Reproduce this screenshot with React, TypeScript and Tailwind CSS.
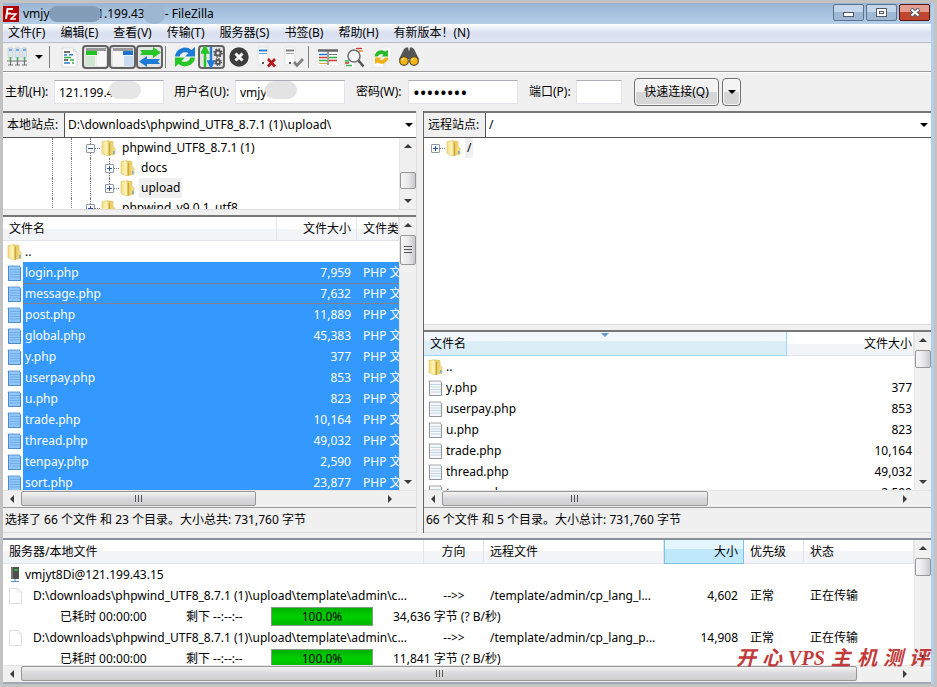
import type { ReactNode } from "react";

const FONT = "font-['Noto_Sans','Noto_Sans_CJK_SC',sans-serif]";

/* ---------- icons ---------- */

function Folder() {
  return (
    <svg width="16" height="16" viewBox="0 0 16 16" aria-hidden="true" className="shrink-0">
      <defs>
        <linearGradient id="fold-a" x1="0" x2="1">
          <stop offset="0" stopColor="#f3dc7c" />
          <stop offset=".6" stopColor="#fdf5bd" />
          <stop offset="1" stopColor="#ecd06a" />
        </linearGradient>
        <linearGradient id="fold-b" x1="0" x2="1">
          <stop offset="0" stopColor="#e2bf4a" />
          <stop offset="1" stopColor="#f6e38e" />
        </linearGradient>
      </defs>
      <path d="M6.500 .8L12 1.500V7l2 1v6.500L8 15.300z" fill="url(#fold-b)" stroke="#dcbd55" strokeWidth=".6" />
      <path d="M1 1.500L5.500 .8L8.800 3V15.500L5.500 15.500L1 13.500Z" fill="url(#fold-a)" stroke="#dfc25e" strokeWidth=".6" />
      <path d="M7.600 3h1.300v12.500H7.600z" fill="#c9a234" />
      <path d="M12.200 11h1.300v3h-1.300z" fill="#5aa5dc" />
    </svg>
  );
}

function PhpFile({ selected }: { selected?: boolean }) {
  const paper = selected ? "#92c6f8" : "#f6f9fb";
  const line = selected ? "#6cadec" : "#c3d3df";
  const edge = selected ? "#4c8cc9" : "#8e9498";
  return (
    <svg width="16" height="18" viewBox="0 0 16 18" aria-hidden="true" className="shrink-0">
      <path d="M1 2H12L14 4V17H1Z" fill={paper} />
      <path d="M2.500 5.500H13M2.500 8H13M2.500 10.500H13M2.500 13H13" stroke={line} strokeWidth="1" />
      <path d="M1.500 2V16.500H13.500V4" fill="none" stroke={edge} />
      <path d="M1 2.500l1-1 1 1 1-1 1 1 1-1 1 1 1-1 1 1 1-1 1 1 1-1 2 3" fill="none" stroke={edge} strokeWidth=".9" />
    </svg>
  );
}

function BlankFile() {
  return (
    <svg width="16" height="18" viewBox="0 0 16 18" aria-hidden="true" className="shrink-0">
      <path d="M1.500 1.500H10L13.500 5V16.500H1.500Z" fill="#fff" stroke="#dedede" strokeLinejoin="round" />
      <path d="M10 1.500V5H13.500" fill="none" stroke="#e8e8e8" />
    </svg>
  );
}

function ServerIcon() {
  return (
    <svg width="16" height="18" viewBox="0 0 16 18" aria-hidden="true" className="shrink-0">
      <path d="M4 1h8v12H4z" fill="#505050" />
      <path d="M4 1h2v12H4z" fill="#777" />
      <path d="M7 3h4v2H7z" fill="#2fae2f" />
      <path d="M7.500 13h1v2h-1zM4 15h8v1H4z" fill="#4b90c8" />
    </svg>
  );
}

function Arrow({ dir }: { dir: "up" | "down" | "left" | "right" }) {
  const d = { up: "M0 5L4 1L8 5Z", down: "M0 2L4 6L8 2Z", left: "M6 0L2 4L6 8Z", right: "M2 0L6 4L2 8Z" }[dir];
  return (
    <svg width="8" height="8" viewBox="0 0 8 8" aria-hidden="true">
      <path d={d} fill="#3c3c3c" />
    </svg>
  );
}

function Caret() {
  return (
    <svg width="8" height="4" viewBox="0 0 8 4" aria-hidden="true">
      <path d="M0 0h8L4 4Z" fill="#000" />
    </svg>
  );
}

function I({ children }: { children: ReactNode }) {
  return (
    <svg width="22" height="22" viewBox="0 0 22 22" aria-hidden="true" className="shrink-0">
      {children}
    </svg>
  );
}

const icons = {
  sites: (
    <I>
      <g fill="#dbe5ec" stroke="#c3cdd4" strokeWidth=".8">
        <path d="M2 2h5v10H2zM9 2h5v10H9zM16 2h4.500v10H16z" />
      </g>
      <path d="M3 4h3M10 4h3M17 4h3" stroke="#4c97d9" strokeWidth="1.500" />
      <path d="M4.500 11v4M11.500 11v4M18.500 11v4" stroke="#3fae49" strokeWidth="1.500" />
      <path d="M1 15h20M4.500 15v4M11.500 15v4M18.500 15v4M2 19h5M9 19h5M16 19h5" stroke="#6d7478" strokeWidth="1.200" fill="none" />
    </I>
  ),
  log: (
    <I>
      <path d="M4 2h11l4 4v15H4z" fill="#fafafa" stroke="#dedede" />
      <path d="M15 2l4 4h-4z" fill="#ddd" />
      <path d="M6 6h6M6 14h4" stroke="#444" strokeWidth="1.500" />
      <path d="M6 9h3M11 8.800h4M6 17h6" stroke="#2d7dd2" strokeWidth="1.500" />
      <path d="M6 11.500h7M12 14h4M14 17h2" stroke="#33b04a" strokeWidth="1.500" />
    </I>
  ),
  local: (
    <I>
      <path d="M1 3h20v17H1z" fill="#f0f0f0" />
      <path d="M1 2h20v3H1z" fill="#9a9a9a" />
      <path d="M1 5h11v4H1z" fill="#1fc51f" />
      <path d="M1 10h9v10H1z" fill="#cfe5cf" />
      <path d="M12 5h9v15h-9z" fill="#f8f8f8" />
    </I>
  ),
  remote: (
    <I>
      <path d="M1 3h20v17H1z" fill="#f4f4f4" />
      <path d="M1 2h20v3H1z" fill="#9a9a9a" />
      <path d="M11 5h10v4H11z" fill="#1c73cf" />
      <path d="M12 10h9v10h-9z" fill="#c8dbef" />
    </I>
  ),
  queue: (
    <I>
      <path d="M1 4h13V1l8 5.500L14 12V9H1l2-2.500z" fill="#28c528" />
      <path d="M21 13H8v-3l-8 5.500L8 21v-3h13l-2-2.500z" fill="#1c7bd6" />
    </I>
  ),
  refresh: (
    <I>
      <path d="M1 10.500A10 9.500 0 0 1 17.500 4L21 1v9.500H11l3.500-3.500A6 5.500 0 0 0 5.500 10.500z" fill="#1c7bd6" />
      <path d="M21 11.500A10 9.500 0 0 1 4.500 18L1 21v-9.500H11L7.500 15A6 5.500 0 0 0 16.500 11.500z" fill="#28c528" />
    </I>
  ),
  process: (
    <I>
      <path d="M4 21V5M1 6.500L4 1l3 5.500z" stroke="#28c528" strokeWidth="2.400" fill="#28c528" />
      <path d="M10 1v16M7.500 15.500l2.500 5 2.500-5z" stroke="#1c7bd6" strokeWidth="2.400" fill="#1c7bd6" />
      <circle cx="17" cy="7" r="2.600" fill="none" stroke="#555" strokeWidth="2" />
      <circle cx="17" cy="7" r="4" fill="none" stroke="#555" strokeWidth="1.500" strokeDasharray="1.570 1.570" />
      <circle cx="17" cy="16" r="2" fill="none" stroke="#555" strokeWidth="1.800" />
      <circle cx="17" cy="16" r="3.300" fill="none" stroke="#555" strokeWidth="1.300" strokeDasharray="1.300 1.300" />
    </I>
  ),
  cancel: (
    <I>
      <circle cx="11" cy="11" r="9.700" fill="#3d3d3d" />
      <path d="M7.500 7.500l7 7M14.500 7.500l-7 7" stroke="#fff" strokeWidth="3" />
    </I>
  ),
  disconnect: (
    <I>
      <path d="M3 1h10v18H3z" fill="#fafafa" stroke="#e3e3e3" />
      <path d="M4 4.500h8" stroke="#1c7bd6" strokeWidth="1.800" />
      <path d="M4 7.500h8" stroke="#6aa8e2" />
      <path d="M7 16h2v2H7z" fill="#555" />
      <path d="M13 13l7 7.500M20 13l-7 7.500" stroke="#b5191b" strokeWidth="2.600" />
    </I>
  ),
  reconnect: (
    <I>
      <path d="M3 1h10v18H3z" fill="#fafafa" stroke="#e3e3e3" />
      <path d="M4 4.500h8" stroke="#777" strokeWidth="1.800" />
      <path d="M4 7.500h8" stroke="#aaa" />
      <path d="M7 16h2v2H7z" fill="#555" />
      <path d="M12 16l3 3.500L21 13" stroke="#808080" strokeWidth="2.800" fill="none" />
    </I>
  ),
  filter: (
    <I>
      <path d="M1 3h20v16H1z" fill="#fbfbfb" />
      <path d="M1 4.500h20" stroke="#666" strokeWidth="2.500" />
      <path d="M2 8.500h8" stroke="#1c7bd6" strokeWidth="1.500" />
      <path d="M2 11.500h8M12 14.500h8" stroke="#cf3b35" strokeWidth="1.500" />
      <path d="M2 14.500h8M12 11.500h8" stroke="#2eb53d" strokeWidth="1.500" />
      <path d="M12 8.500h8" stroke="#777" strokeWidth="1" />
      <path d="M2 17.500h8" stroke="#e0a63a" strokeWidth="1" />
      <path d="M11 5v14" stroke="#666" strokeWidth="1.200" />
    </I>
  ),
  search: (
    <I>
      <path d="M11 1h8v8h-8zM2 11h8v10H2z" fill="#fff" />
      <path d="M12 2.500h6" stroke="#c33" strokeWidth="1.500" />
      <path d="M15 5h4" stroke="#d9902b" strokeWidth="1.500" />
      <path d="M1 15h4M2 19.500h6" stroke="#2eb53d" strokeWidth="1.500" />
      <path d="M1 17h4" stroke="#c33" strokeWidth="1.500" />
      <circle cx="10" cy="10" r="6" fill="#f4f4f4" fillOpacity=".85" stroke="#707070" strokeWidth="1.600" />
      <path d="M14.500 14.500l5 6" stroke="#555" strokeWidth="2.600" />
    </I>
  ),
  sync: (
    <I>
      <path d="M10 1h10v13H10zM2 8h11v13H2z" fill="#fdfdfd" stroke="#e6e6e6" />
      <path d="M3.500 10.500A7 7 0 0 1 14.500 5.500L17 4v6.500h-6.500l2-2A4 4 0 0 0 7 10.500z" fill="#28b828" />
      <path d="M17.500 11.500A7 7 0 0 1 6.500 16.500L4 18v-6.500h6.500l-2 2A4 4 0 0 0 14 11.500z" fill="#f0b018" />
    </I>
  ),
  find: (
    <I>
      <path d="M6 3l2-1.500h2l1 4 1-4h2L16 3l5 10-4 4h-3l-1.500-4h-3L8 17H5l-4-4z" fill="#555" />
      <circle cx="6" cy="15" r="4.300" fill="#f9b512" stroke="#5a4a33" strokeWidth="1.200" />
      <circle cx="16" cy="15" r="4.300" fill="#f9b512" stroke="#5a4a33" strokeWidth="1.200" />
      <path d="M4 14.500a2 2 0 0 1 2-2M14 14.500a2 2 0 0 1 2-2" stroke="#fff3cf" fill="none" />
    </I>
  ),
};

function Logo() {
  return (
    <svg width="16" height="16" viewBox="0 0 16 16" aria-hidden="true" className="shrink-0">
      <path d="M0 0h16v16H0z" fill="#b30000" />
      <path d="M3 13L4.500 3H10M4 7.500h4" stroke="#fff" strokeWidth="2" fill="none" />
      <path d="M8 8h5l-5 5h5" stroke="#fff" strokeWidth="1.500" fill="none" />
    </svg>
  );
}

/* ---------- scroll bars ---------- */

type BarProps = { before: number; size: number; after: number; grip?: boolean };

function VBar({ before, size, after, grip }: BarProps) {
  return (
    <div className="flex w-[17px] shrink-0 flex-col border-l border-[#e6e6e6] bg-[#f0f0f0]">
      <button aria-label="向上滚动" className="flex h-[18px] shrink-0 items-center justify-center">
        <Arrow dir="up" />
      </button>
      <div className="flex min-h-0 flex-1 flex-col">
        <div className="basis-0" style={{ flexGrow: before }} />
        <div
          className="flex min-h-0 basis-0 items-center justify-center rounded-xs border border-[#979797] bg-linear-to-r from-[#f6f6f6] via-[#e9e9eb] to-[#c9c9cd]"
          style={{ flexGrow: size }}
        >
          {grip && <span className="h-[7px] w-2 border-y border-[#555] bg-[linear-gradient(#555,#555)] bg-[length:100%_1px] bg-center bg-no-repeat" />}
        </div>
        <div className="basis-0" style={{ flexGrow: after }} />
      </div>
      <button aria-label="向下滚动" className="flex h-[17px] shrink-0 items-center justify-center">
        <Arrow dir="down" />
      </button>
    </div>
  );
}

function HBar({ before, size, after }: BarProps) {
  return (
    <div className="flex h-[17px] shrink-0 border-t border-[#e6e6e6] bg-[#f0f0f0] pr-[17px]">
      <button aria-label="向左滚动" className="flex w-[18px] shrink-0 items-center justify-center">
        <Arrow dir="left" />
      </button>
      <div className="flex min-w-0 flex-1 pb-px">
        <div className="basis-0" style={{ flexGrow: before }} />
        <div
          className="flex min-w-0 basis-0 items-center justify-center rounded-xs border border-[#979797] bg-linear-to-b from-[#f3f3f3] via-[#d9d9db] to-[#cfcfcf]"
          style={{ flexGrow: size }}
        >
          <span className="h-[7px] w-[7px] border-x border-[#555] bg-[linear-gradient(#555,#555)] bg-[length:1px_100%] bg-center bg-no-repeat" />
        </div>
        <div className="basis-0" style={{ flexGrow: after }} />
      </div>
      <button aria-label="向右滚动" className="flex w-[18px] shrink-0 items-center justify-center">
        <Arrow dir="right" />
      </button>
    </div>
  );
}

/* ---------- top of the window ---------- */

function TitleBar() {
  return (
    <header className="flex h-[21px] shrink-0 items-center justify-between bg-linear-to-b from-[#9ab5d3] to-[#b5cfe8]">
      <div className="relative flex items-center gap-1">
        <Logo />
        <h1 className="text-xs">vmjyt8Di@121.199.43.15 - FileZilla</h1>
        <span className="absolute left-[46px] h-4 w-[52px] rounded-full bg-[#839db9]" />
        <span className="absolute left-[140px] h-5 w-[22px] rounded-full bg-[#9db7d3]" />
      </div>
      <div className="flex h-[18px] gap-0.5 self-start pr-px pt-px">
        <button aria-label="最小化" className="flex h-[17px] w-[31px] items-center justify-center rounded-xs border border-[#5b7390] bg-linear-to-b from-[#c3d6ea] from-50% to-[#9fb9d4] to-50%">
          <span className="mt-1 h-[5px] w-[11px] border border-[#555b66] bg-white" />
        </button>
        <button aria-label="最大化" className="flex h-[17px] w-[31px] items-center justify-center rounded-xs border border-[#5b7390] bg-linear-to-b from-[#c3d6ea] from-50% to-[#9fb9d4] to-50%">
          <span className="flex h-[9px] w-[11px] items-center justify-center border border-[#555b66] bg-white">
            <span className="h-[3px] w-[5px] border border-[#555b66]" />
          </span>
        </button>
        <button aria-label="关闭" className="flex h-[17px] w-[31px] items-center justify-center rounded-xs border border-[#5a1510] bg-linear-to-b from-[#e39d92] from-50% to-[#c2452f] to-50%">
          <svg width="12" height="9" viewBox="0 0 12 9" aria-hidden="true">
            <path d="M2 1l8 7M10 1L2 8" stroke="#555b66" strokeWidth="4" />
            <path d="M2.500 1.500l7 6M9.500 1.500l-7 6" stroke="#fff" strokeWidth="2.200" />
          </svg>
        </button>
      </div>
    </header>
  );
}

const menus = ["文件(F)", "编辑(E)", "查看(V)", "传输(T)", "服务器(S)", "书签(B)", "帮助(H)", "有新版本！(N)"];

function MenuBar() {
  return (
    <nav className="flex h-[19px] shrink-0 items-center gap-[15px] border-b border-[#b6bccc] bg-linear-to-b from-white via-[#d8dff0] to-[#e1e6f6] px-[5px]">
      {menus.map((m) => (
        <button key={m} className="shrink-0 whitespace-nowrap">
          {m}
        </button>
      ))}
    </nav>
  );
}

function Tool({ label, icon, on }: { label: string; icon: ReactNode; on?: boolean }) {
  return (
    <button
      aria-label={label}
      className={`flex h-6 w-[27px] shrink-0 items-center justify-center rounded-sm ${on ? "border-2 border-[#636363] bg-[#e4e4e4]" : ""}`}
    >
      {icon}
    </button>
  );
}

function Sep() {
  return <span className="ml-0.5 mr-[5px] h-[22px] w-px shrink-0 bg-[#808080]" />;
}

function Toolbar() {
  return (
    <div role="toolbar" className="flex h-[29px] shrink-0 items-center border-b border-[#999]">
      <Tool label="站点管理器" icon={icons.sites} />
      <button aria-label="站点列表" className="flex h-6 w-[17px] items-center justify-center">
        <Caret />
      </button>
      <Sep />
      <Tool label="消息日志" icon={icons.log} />
      <Tool label="本地目录树" icon={icons.local} on />
      <Tool label="远程目录树" icon={icons.remote} on />
      <Tool label="传输队列" icon={icons.queue} on />
      <Sep />
      <Tool label="刷新" icon={icons.refresh} />
      <Tool label="处理队列" icon={icons.process} on />
      <Tool label="取消" icon={icons.cancel} />
      <Tool label="断开" icon={icons.disconnect} />
      <Tool label="重新连接" icon={icons.reconnect} />
      <Sep />
      <Tool label="过滤" icon={icons.filter} />
      <Tool label="目录比较" icon={icons.search} />
      <Tool label="同步浏览" icon={icons.sync} />
      <Tool label="搜索" icon={icons.find} />
    </div>
  );
}

const field = "h-6 min-w-0 border border-[#e2e3ea] border-t-[#abadb3] bg-white px-1 outline-none";
const push = "h-7 rounded-sm border border-[#707070] bg-linear-to-b from-[#f3f3f3] from-50% to-[#d6d6d6] to-50% shadow-[inset_0_0_0_1px_#fafafa]";

function QuickConnect() {
  return (
    <form className="flex h-[39px] shrink-0 items-center border-t border-white pl-0.5" onSubmit={(e) => e.preventDefault()}>
      <label htmlFor="host" className="w-[49px] shrink-0 whitespace-nowrap">主机(H):</label>
      <span className="relative mr-2.5 flex w-[110px]">
        <input id="host" className={`${field} w-full text-xs`} defaultValue="121.199.43.15" />
        <span className="absolute left-[55px] top-px h-[18px] w-8 rounded-full bg-[#e6e6e6]" />
      </span>
      <label htmlFor="user" className="w-[61px] shrink-0 whitespace-nowrap">用户名(U):</label>
      <span className="relative mr-[11px] flex w-[110px]">
        <input id="user" className={`${field} w-full text-xs`} defaultValue="vmjyt8Di" />
        <span className="absolute left-[30px] top-px h-[18px] w-8 rounded-full bg-[#e3e3e3]" />
      </span>
      <label htmlFor="pass" className="w-[52px] shrink-0 whitespace-nowrap">密码(W):</label>
      <input id="pass" type="password" className={`${field} mr-[11px] w-[110px] text-lg leading-5`} defaultValue="password" />
      <label htmlFor="port" className="w-[47px] shrink-0 whitespace-nowrap">端口(P):</label>
      <input id="port" className={`${field} mr-3 w-[46px] text-xs`} />
      <button className={`${push} mr-[3px] w-[85px]`}>快速连接(Q)</button>
      <button type="button" aria-label="历史记录" className={`${push} flex w-[19px] items-center justify-center`}>
        <Caret />
      </button>
    </form>
  );
}

/* ---------- trees ---------- */

function SiteRow({ id, label, value }: { id: string; label: string; value: string }) {
  return (
    <div className="flex h-[25px] shrink-0 items-center border-b border-[#555] bg-white">
      <label htmlFor={id} className="flex h-full w-[62px] shrink-0 items-center whitespace-nowrap border-r border-[#555] bg-[#f0f0f0] pl-1">
        {label}
      </label>
      <input id={id} className="min-w-0 flex-1 bg-white px-[3px] text-xs outline-none" defaultValue={value} />
      <button aria-label="展开路径" className="mr-[3px] flex h-full items-center">
        <Caret />
      </button>
    </div>
  );
}

type Node = { guides: number; open?: boolean; name: string; hot?: boolean; last?: boolean; root?: boolean };

function TreeRow({ guides, open, name, hot, last, root }: Node) {
  return (
    <li className="flex h-5 items-center">
      {Array.from({ length: guides }, (_, i) => (
        <span key={i} className="flex w-[19px] shrink-0 justify-center self-stretch">
          <span className="border-l border-dotted border-[#777]" />
        </span>
      ))}
      <span className="relative flex w-[19px] shrink-0 items-center justify-center self-stretch">
        {!root && <span className={`absolute left-[9px] top-0 border-l border-dotted border-[#777] ${last ? "h-1/2" : "h-full"}`} />}
        <span className="absolute left-3 right-0 border-t border-dotted border-[#777]" />
        <button aria-label={open ? "折叠" : "展开"} className="relative flex h-[9px] w-[9px] items-center justify-center rounded-[1px] border border-[#8f98a5] bg-white">
          <span className="h-px w-[5px] bg-[#2c4f9c]" />
          {!open && <span className="absolute h-[5px] w-px bg-[#2c4f9c]" />}
        </button>
      </span>
      <span className="flex w-5 shrink-0 pl-px">
        <Folder />
      </span>
      <span className={`flex h-5 items-center whitespace-nowrap px-0.5 ${hot ? "bg-[#f0f0f0]" : ""}`}>{name}</span>
    </li>
  );
}

/* ---------- file lists ---------- */

const head = "h-6 border-b border-r border-[#e0e3e8] bg-linear-to-b from-white from-50% to-[#f2f4f7] to-50% p-0 font-normal whitespace-nowrap";
const focusDots =
  "bg-[image:repeating-linear-gradient(90deg,#d2691e_0_1px,#3399ff_1px_2px),repeating-linear-gradient(90deg,#d2691e_0_1px,#3399ff_1px_2px)] bg-[length:100%_1px] bg-[position:top,bottom] bg-no-repeat";

type FileRow = [string, string];

const localFiles: FileRow[] = [
  ["login.php", "7,959"],
  ["message.php", "7,632"],
  ["post.php", "11,889"],
  ["global.php", "45,383"],
  ["y.php", "377"],
  ["userpay.php", "853"],
  ["u.php", "823"],
  ["trade.php", "10,164"],
  ["thread.php", "49,032"],
  ["tenpay.php", "2,590"],
  ["sort.php", "23,877"],
];

const remoteFiles: FileRow[] = [
  ["y.php", "377"],
  ["userpay.php", "853"],
  ["u.php", "823"],
  ["trade.php", "10,164"],
  ["thread.php", "49,032"],
  ["tenpay.php", "2,590"],
];

function LocalList() {
  return (
    <table className="w-full table-fixed border-separate border-spacing-0">
      <colgroup>
        <col />
        <col className="w-20" />
        <col className="w-[42px]" />
      </colgroup>
      <thead>
        <tr>
          <th className={`${head} pl-1.5 text-left`}>文件名</th>
          <th className={`${head} pr-[5px] text-right`}>文件大小</th>
          <th className={`${head} overflow-hidden pl-1.5 text-left`}>文件类型</th>
        </tr>
      </thead>
      <tbody>
        <tr className="h-[21px]">
          <td colSpan={3} className="p-0">
            <span className="flex h-[21px] items-center">
              <span className="flex w-5 justify-end"><Folder /></span>
              <span className="pl-0.5">..</span>
            </span>
          </td>
        </tr>
        {localFiles.map(([name, size], i) => {
          const focus = i === 1 ? focusDots : "";
          return (
            <tr key={name} className="h-[21px] text-white">
              <td className="p-0">
                <span className="flex h-[21px] items-center">
                  <span className="flex w-5 shrink-0 justify-end"><PhpFile selected /></span>
                  <span className={`flex h-full flex-1 items-center bg-[#3399ff] pl-0.5 ${focus}`}>{name}</span>
                </span>
              </td>
              <td className={`bg-[#3399ff] p-0 pr-1.5 text-right ${focus}`}>{size}</td>
              <td className={`overflow-hidden whitespace-nowrap bg-[#3399ff] p-0 pl-1.5 ${focus}`}>PHP 文件</td>
            </tr>
          );
        })}
      </tbody>
    </table>
  );
}

function RemoteList() {
  return (
    <table className="w-full table-fixed border-separate border-spacing-0">
      <colgroup>
        <col />
        <col className="w-[127px]" />
      </colgroup>
      <thead>
        <tr>
          <th className="relative h-6 border-b border-r border-[#96d9f9] bg-linear-to-b from-[#f2f8fd] from-40% to-[#dbeef8] to-40% p-0 pl-1.5 text-left font-normal">
            文件名
            <svg width="8" height="4" viewBox="0 0 8 4" aria-hidden="true" className="absolute inset-x-0 top-px mx-auto">
              <path d="M0 0h8L4 4Z" fill="#5f9ccb" />
            </svg>
          </th>
          <th className={`${head} pr-px text-right`}>文件大小</th>
        </tr>
      </thead>
      <tbody>
        <tr>
          <td colSpan={2} className="p-0">
            <span className="flex h-[21px] items-center">
              <span className="flex w-5 justify-end"><Folder /></span>
              <span className="pl-0.5">..</span>
            </span>
          </td>
        </tr>
        {remoteFiles.map(([name, size]) => (
          <tr key={name}>
            <td className="p-0">
              <span className="flex h-[21px] items-center">
                <span className="flex w-5 shrink-0 justify-end"><PhpFile /></span>
                <span className="pl-0.5">{name}</span>
              </span>
            </td>
            <td className="p-0 pr-0.5 text-right">{size}</td>
          </tr>
        ))}
      </tbody>
    </table>
  );
}

const frame = "flex flex-col border-t-2 border-[#777] bg-white";

function Status({ children }: { children: ReactNode }) {
  return (
    <div role="status" className="flex h-[26px] shrink-0 items-center whitespace-nowrap border-b border-t border-b-[#dcdcdc] border-t-[#999] bg-[#f0f0f0] pl-0.5">
      {children}
    </div>
  );
}

function LocalPane() {
  return (
    <section className="flex min-h-0 min-w-0 flex-col gap-[5px] border-r border-[#dcdcdc]">
      <div className={`${frame} shrink-0 border-b border-b-[#dcdcdc]`}>
        <SiteRow id="local-path" label="本地站点:" value="D:\downloads\phpwind_UTF8_8.7.1 (1)\upload\" />
        <div className="flex h-[71px]">
          <ul className="min-w-0 flex-1 overflow-hidden pl-10">
            <TreeRow guides={2} open name="phpwind_UTF8_8.7.1 (1)" />
            <TreeRow guides={3} name="docs" />
            <TreeRow guides={3} name="upload" hot last />
            <TreeRow guides={2} name="phpwind_v9.0.1_utf8" />
          </ul>
          <VBar before={17} size={16} after={3} />
        </div>
      </div>
      <div className={`${frame} min-h-0 flex-1`}>
        <div className="flex min-h-0 flex-1">
          <div className="min-w-0 flex-1 overflow-hidden">
            <LocalList />
          </div>
          <VBar before={0} size={28} after={210} grip />
        </div>
        <HBar before={0} size={235} after={126} />
        <Status>选择了 66 个文件 和 23 个目录。大小总共: 731,760 字节</Status>
      </div>
    </section>
  );
}

function RemotePane() {
  return (
    <section className="flex min-h-0 min-w-0 flex-col gap-[5px] border-l border-[#666]">
      <div className={`${frame} shrink-0 border-b border-b-[#dcdcdc]`}>
        <SiteRow id="remote-path" label="远程站点:" value="/" />
        <ul className="h-[186px] pl-0.5">
          <TreeRow guides={0} name="/" hot root />
        </ul>
      </div>
      <div className={`${frame} min-h-0 flex-1`}>
        <div className="flex min-h-0 flex-1">
          <div className="min-w-0 flex-1 overflow-hidden">
            <RemoteList />
          </div>
          <VBar before={0} size={16} after={107} />
        </div>
        <HBar before={0} size={265} after={189} />
        <Status>66 个文件 和 5 个目录。大小总计: 731,760 字节</Status>
      </div>
    </section>
  );
}

/* ---------- transfer queue ---------- */

const transfers = [
  { remote: "/template/admin/cp_lang_l...", size: "4,602", done: "34,636 字节 (? B/秒)" },
  { remote: "/template/admin/cp_lang_p...", size: "14,908", done: "11,841 字节 (? B/秒)" },
];

function Queue() {
  return (
    <section className="relative flex shrink-0 flex-col border-b-2 border-t-2 border-b-[#a4a8b0] border-t-[#8a8f99] bg-white">
      <div className="flex h-[125px]">
        <div className="min-w-0 flex-1 overflow-hidden">
          <table className="w-full table-fixed border-separate border-spacing-0 whitespace-nowrap">
            <colgroup>
              <col />
              <col className="w-[60px]" />
              <col className="w-[180px]" />
              <col className="w-20" />
              <col className="w-[60px]" />
              <col className="w-[110px]" />
            </colgroup>
            <thead>
              <tr>
                <th className={`${head} pl-1.5 text-left`}>服务器/本地文件</th>
                <th className={head}>方向</th>
                <th className={`${head} pl-1.5 text-left`}>远程文件</th>
                <th className="h-6 border-b border-x border-[#7fc4e8] bg-linear-to-b from-[#e3f6fe] from-40% to-[#bfe8fb] to-40% p-0 pr-[5px] text-right font-normal">大小</th>
                <th className={`${head} pl-1.5 text-left`}>优先级</th>
                <th className={`${head} pl-1.5 text-left`}>状态</th>
              </tr>
            </thead>
            <tbody>
              <tr>
                <td colSpan={6} className="p-0">
                  <span className="flex h-[21px] items-center pl-1">
                    <ServerIcon />
                    <span className="pl-0.5">vmjyt8Di@121.199.43.15</span>
                  </span>
                </td>
              </tr>
              {transfers.flatMap((t) => [
                <tr key={t.size}>
                  <td className="p-0">
                    <span className="flex h-[21px] items-center pl-[5px]">
                      <BlankFile />
                      <span className="pl-[9px]">D:\downloads\phpwind_UTF8_8.7.1 (1)\upload\template\admin\c...</span>
                    </span>
                  </td>
                  <td className="p-0 text-center">{"-->>"}</td>
                  <td className="p-0 pl-1.5">{t.remote}</td>
                  <td className="p-0 pr-1.5 text-right">{t.size}</td>
                  <td className="p-0 pl-1.5">正常</td>
                  <td className="p-0 pl-1.5">正在传输</td>
                </tr>,
                <tr key={t.done}>
                  <td colSpan={6} className="p-0">
                    <span className="flex h-[21px] items-center pl-[57px]">
                      <span className="w-[126px]">已耗时 00:00:00</span>
                      <span className="w-[85px]">剩下 --:--:--</span>
                      <span className="mr-5 flex h-[19px] w-[102px] items-center justify-center border border-[#7f9f7f] bg-linear-to-b from-[#00b000] via-[#00d000] to-[#00b800]">100.0%</span>
                      <span>{t.done}</span>
                    </span>
                  </td>
                </tr>,
              ])}
            </tbody>
          </table>
        </div>
        <VBar before={0} size={16} after={74} />
      </div>
      <HBar before={0} size={836} after={39} />
      <p className="absolute bottom-3 right-0.5 flex w-[193px] items-center justify-between font-['Liberation_Serif','Noto_Sans_CJK_SC',serif] text-xl font-semibold italic leading-6 text-[#c23b3b]">
        <span>开</span>
        <span>心</span>
        <span>VPS</span>
        <span>主</span>
        <span>机</span>
        <span>测</span>
        <span>评</span>
      </p>
    </section>
  );
}

export default function App() {
  return (
    <div className={`flex h-screen min-h-[560px] flex-col overflow-hidden bg-[#c3c3c3] p-[3px] text-xs text-black ${FONT}`}>
      <main className="flex min-h-0 flex-1 flex-col bg-[#b5cfe8] pr-[3px]">
        <TitleBar />
        <div className="flex min-h-0 flex-1 flex-col bg-[#f0f0f0]">
          <MenuBar />
          <Toolbar />
          <QuickConnect />
          <div className="mb-[5px] grid min-h-0 flex-1 grid-cols-[414fr_508fr] gap-1.5">
            <LocalPane />
            <RemotePane />
          </div>
          <Queue />
        </div>
      </main>
    </div>
  );
}
